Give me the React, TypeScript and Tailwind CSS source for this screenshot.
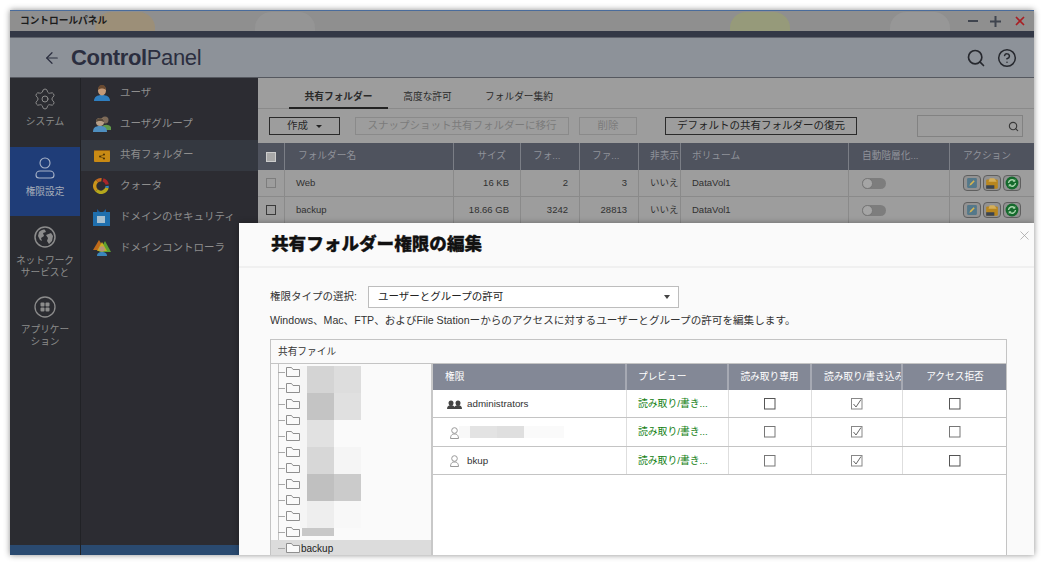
import React from "react";
import { Settings, Search, X, ArrowLeft, CircleHelp } from "lucide-react";

const font = { fontFamily: '"Liberation Sans","Noto Sans CJK JP",sans-serif' };

function PersonIcon({ shirt = "#2f7fc0", hair = "#6a4a30" }: { shirt?: string; hair?: string }) {
  return (
    <svg width="18" height="18" viewBox="0 0 18 18">
      <path d="M1 17c0-4 3-6 8-6s8 2 8 6z" fill={shirt} />
      <ellipse cx="9" cy="6.5" rx="4" ry="5" fill="#c49a78" />
      <path d="M5 6c0-4 2-5 4-5s4 1 4 5c-2-2-6-2-8 0z" fill={hair} />
    </svg>
  );
}

function GroupIcon() {
  return (
    <svg width="18" height="18" viewBox="0 0 18 18">
      <circle cx="12" cy="5" r="3.5" fill="#7d6a58" />
      <path d="M9 12c1-3 7-3 9 0v3H9z" fill="#5f9a4a" />
      <path d="M0 17c0-4 2-6 7-6s7 2 7 6z" fill="#4f8fc0" />
      <circle cx="7" cy="7" r="4" fill="#b8a088" />
      <path d="M3 7c0-3 2-4 4-4s4 1 4 4c-2-1.500-6-1.500-8 0z" fill="#5a4a3a" />
    </svg>
  );
}

function FolderIcon() {
  return (
    <svg width="18" height="14" viewBox="0 0 18 14">
      <path d="M1 2h16v2H1z" fill="#8a5a18" />
      <rect x="1" y="3" width="16" height="11" rx="1" fill="#c98a14" />
      <circle cx="7" cy="8.500" r="1" fill="#4a3208" />
      <circle cx="11" cy="6.500" r="1" fill="#4a3208" />
      <circle cx="11" cy="10.500" r="1" fill="#4a3208" />
      <path d="M7 8.500l4-2M7 8.500l4 2" stroke="#4a3208" strokeWidth=".6" />
    </svg>
  );
}

function QuotaIcon() {
  return (
    <svg width="16" height="16" viewBox="0 0 16 16" fill="none" strokeWidth="3.400">
      <path d="M4 3.100A6.200 6.200 0 0 0 3.500 12.400" stroke="#c9941a" />
      <path d="M3.500 12.400A6.200 6.200 0 0 0 14 9.800" stroke="#b5a71c" />
      <path d="M14 9.800A6.200 6.200 0 0 0 14 8" stroke="#2f86c8" />
      <path d="M8.500 1.800A6.200 6.200 0 0 0 4 3.100" stroke="#c46a20" />
      <path d="M10 1.800A6.200 6.200 0 0 1 14.200 6.500" stroke="#a8262a" />
    </svg>
  );
}

function DomainIcon() {
  return (
    <svg width="17" height="17" viewBox="0 0 17 17">
      <path d="M4 0l3 3h3l3-3v4H4z" fill="#1c5a96" />
      <rect x="0" y="3" width="17" height="14" fill="#1f6fae" />
      <rect x="4" y="7" width="8" height="7" fill="#a9c0cf" />
    </svg>
  );
}

function ControllerIcon() {
  return (
    <svg width="18" height="18" viewBox="0 0 18 18">
      <path d="M6 1l6 10H0z" fill="#c06a1a" />
      <path d="M12 2l6 11H6z" fill="#5fa030" />
      <path d="M9 3l5 9H4z" fill="#c9b020" />
      <path d="M4 17c0-3 2-4 5-4s5 1 5 4z" fill="#3a86bc" />
      <circle cx="9" cy="10" r="2.800" fill="#b89478" />
    </svg>
  );
}

function GlobeIcon() {
  return (
    <svg width="22" height="22" viewBox="0 0 22 22" fill="none">
      <circle cx="11" cy="11" r="10" stroke="#8c8c8c" strokeWidth="1.500" />
      <path
        d="M5 6c2-2 5-3 6-2l1 2-3 1 1 3-3 2 1 3-2-1-2-4zM12 9l5-2 2 3-1 5-3 3-2-3 1-3z"
        fill="#8c8c8c"
      />
    </svg>
  );
}

function AppsIcon() {
  return (
    <svg width="22" height="22" viewBox="0 0 22 22" fill="none">
      <circle cx="11" cy="11" r="10" stroke="#8c8c8c" strokeWidth="1.300" />
      <rect x="6.500" y="6.500" width="4" height="4" rx="1" fill="#8c8c8c" />
      <rect x="11.500" y="6.500" width="4" height="4" rx="1" fill="#8c8c8c" />
      <rect x="6.500" y="11.500" width="4" height="4" rx="1" fill="#8c8c8c" />
      <rect x="11.500" y="11.500" width="4" height="4" rx="1" fill="#8c8c8c" />
    </svg>
  );
}

function OutlineUser() {
  return (
    <svg width="22" height="22" viewBox="0 0 22 22" fill="none" stroke="#a9b4c8" strokeWidth="1.100">
      <circle cx="11" cy="6" r="5" />
      <path d="M6 14h10a4 4 0 0 1 4 4v0a3 3 0 0 1-3 3H5a3 3 0 0 1-3-3v0a4 4 0 0 1 4-4z" />
    </svg>
  );
}

function TreeFolder() {
  return (
    <svg width="14" height="12" viewBox="0 0 14 12" fill="none" stroke="#8f8f8f">
      <path d="M.5 10.500V1.500h5l1.500 2h6.500v7z" fill="#fafafa" />
    </svg>
  );
}

function Box({ checked = false, tone = "#555" }: { checked?: boolean; tone?: string }) {
  return (
    <svg width="12" height="12" viewBox="0 0 12 12" fill="none">
      <rect x=".5" y=".5" width="10.500" height="10.500" fill="#fff" stroke={tone} />
      {checked && <path d="M2.500 6l2.500 3 5-7.500" stroke="#666" strokeWidth="1" />}
    </svg>
  );
}

function ActionButtons() {
  const cls = "w-[18px] h-[16px] rounded-[4px] border border-[#5f5f5f] bg-[#929292] flex items-center justify-center";
  return (
    <div className="flex gap-[2px]">
      <div className={cls}>
        <svg width="12" height="12" viewBox="0 0 11 11">
          <rect x="1" y="1" width="9" height="9" rx="1" fill="#54788a" />
          <path d="M3 8l1-2 3-3 1 1-3 3z" fill="#d8b650" />
        </svg>
      </div>
      <div className={cls}>
        <svg width="14" height="13" viewBox="0 0 12 11">
          <rect x="1" y="2" width="10" height="8" rx="1" fill="#b8861e" />
          <path d="M4 1h4l2 3H3z" fill="#d4ae58" />
          <path d="M1 7h7v3H1z" fill="#3a4452" />
        </svg>
      </div>
      <div className={cls}>
        <svg width="14" height="14" viewBox="0 0 12 12" fill="none">
          <circle cx="6" cy="6" r="5.500" fill="#146a2c" />
          <path d="M3 6a3 3 0 0 1 5-2M9 6a3 3 0 0 1-5 2" stroke="#a9d4ac" strokeWidth="1.200" />
          <path d="M8.800 2.500V5H6.500zM3.200 9.500V7h2.300z" fill="#a9d4ac" />
        </svg>
      </div>
    </div>
  );
}

const railItems = [
  { label: ["システム"], icon: <Settings size={24} strokeWidth={1} color="#8c8c8c" />, h: "h-[69px]", pt: "pt-[9px]", mt: "mt-[5px]" },
  { label: ["権限設定"], icon: <OutlineUser />, h: "h-[69px]", pt: "pt-[10px]", mt: "mt-[7px]", active: true },
  { label: ["ネットワーク", "サービスと"], icon: <GlobeIcon />, h: "h-[70px]", pt: "pt-[10px]", mt: "mt-[7px]" },
  { label: ["アプリケー", "ション"], icon: <AppsIcon />, h: "h-[70px]", pt: "pt-[10px]", mt: "mt-[6px]" },
];

const subItems = [
  { label: "ユーザ", icon: <PersonIcon /> },
  { label: "ユーザグループ", icon: <GroupIcon /> },
  { label: "共有フォルダー", icon: <FolderIcon />, active: true },
  { label: "クォータ", icon: <QuotaIcon /> },
  { label: "ドメインのセキュリティ", icon: <DomainIcon /> },
  { label: "ドメインコントローラ", icon: <ControllerIcon /> },
];

const mainCols = "grid grid-cols-[27px_169px_67px_59px_59px_42px_168px_101px_84px]";

const shareRows = [
  { name: "Web", size: "16 KB", a: "2", b: "3", tone: "#7d7d7d" },
  { name: "backup", size: "18.66 GB", a: "3242", b: "28813", tone: "#3a3a3a" },
];

const permCols = "grid grid-cols-[194px_102px_83px_91px_104px]";

const mosaic = [
  ["#d4d4d4", "#dddddd"],
  ["#c4c4c4", "#e0e0e0"],
  ["#e1e1e1", "#fafafa"],
  ["#d7d7d7", "#f5f5f5"],
  ["#c0c0c0", "#cbcbcb"],
  ["#eeeeee", "#f8f8f8"],
];

function GhostBlob({ color }: { color: string }) {
  return <div className={`w-[60px] h-[34px] rounded-t-[16px] mt-[1px] ${color}`} />;
}

export default function App() {
  return (
    <div style={font} className="w-[1044px] h-[565px] bg-white pt-[10px] px-[10px] overflow-hidden">
      <div className="relative w-[1024px] h-[545px] overflow-hidden flex flex-col shadow-[0_0_6px_rgba(0,0,0,0.45)] border-t border-[#4a6c9c]">
        {/* title bar */}
        <div className="relative h-[20px] shrink-0 bg-[#8f8f8f] flex items-center px-[10px] overflow-hidden">
          <span className="text-[9.700px] font-bold text-[#1c1c1c] leading-none z-10">コントロールパネル</span>
          <div className="absolute inset-0 flex">
            <div className="ml-[85px]"><GhostBlob color="bg-[#9c8f78]" /></div>
            <div className="ml-[100px]"><GhostBlob color="bg-[#959595]" /></div>
            <div className="ml-[415px]"><GhostBlob color="bg-[#969a7a]" /></div>
            <div className="ml-[100px]"><GhostBlob color="bg-[#979797]" /></div>
          </div>
          <div className="ml-auto flex items-center gap-[12px] z-10 mr-[-3px]">
            <div className="w-[10px] h-[2px] bg-[#3f444e]" />
            <svg width="11" height="11" viewBox="0 0 11 11"><path d="M5.500 0v11M0 5.500h11" stroke="#3f444e" strokeWidth="2" /></svg>
            <X size={14} strokeWidth={3} color="#a81f24" />
          </div>
        </div>
        <div className="h-[7px] shrink-0 bg-[#333846] border-b border-[#5d616a]" />
        {/* header */}
        <div className="h-[39px] shrink-0 bg-[#8d9299] flex items-center pl-[33px] pr-[17px] text-[#2b2e3f]">
          <ArrowLeft size={18} strokeWidth={1.600} />
          <span className="ml-[10px] text-[22px] leading-none tracking-[-0.35px]">
            <span className="font-bold">Control</span>Panel
          </span>
          <Search size={20} strokeWidth={2} className="ml-auto text-[#26282e]" />
          <CircleHelp size={20} strokeWidth={1.800} className="ml-[11px] text-[#26282e]" />
        </div>
        {/* body */}
        <div className="flex-1 min-h-0 flex border-t border-[#55585f]">
          <div className="relative w-[71px] shrink-0 bg-[#2b2c31] border-r border-[#212226] flex flex-col">
            {railItems.map((r) => (
              <div
                key={r.label[0]}
                className={`${r.h} ${r.pt} shrink-0 flex flex-col items-center ${r.active ? "bg-[#1f3d78] text-[#a5adb8]" : "text-[#8c8c8c]"}`}
              >
                {r.icon}
                <div className={`${r.mt} text-[9.700px] leading-[11.500px] text-center`}>
                  {r.label.map((l) => <div key={l}>{l}</div>)}
                </div>
              </div>
            ))}
            <div className="mt-auto h-[10px] shrink-0 bg-[#2a4a70]" />
          </div>
          <div className="w-[177px] shrink-0 bg-[#2c2c32] flex flex-col">
            {subItems.map((s) => (
              <div
                key={s.label}
                className={`h-[31px] shrink-0 flex items-center text-[10.500px] text-[#8e8e8e] ${s.active ? "bg-[#343840]" : ""}`}
              >
                <div className="w-[39px] pl-[12px] pb-[1px] flex items-center">{s.icon}</div>
                <span className="whitespace-nowrap pb-[2px]">{s.label}</span>
              </div>
            ))}
            <div className="mt-auto h-[10px] shrink-0 bg-[#2a4a70]" />
          </div>
          <div className="flex-1 min-w-0 bg-[#9d9d9d] flex flex-col">
            <div className="h-[31px] shrink-0 pl-[31px] flex items-end border-b border-[#8a8a8a] text-[9.700px] text-[#2a2a2a]">
              <div className="w-[99px] h-[22px] flex items-center justify-center font-bold border-b-2 border-[#222] mb-[-1px]">共有フォルダー</div>
              <div className="w-[65px] h-[22px] ml-[7px] flex items-center justify-center">高度な許可</div>
              <div className="w-[80px] h-[22px] ml-[19px] flex items-center justify-center">フォルダー集約</div>
            </div>
            <div className="h-[34px] shrink-0 flex items-center pl-[11px] text-[10.500px]">
              <div className="w-[71px] h-[18px] border border-[#2a2a2a] flex items-center justify-center gap-[8px] text-[#2a2a2a]">
                作成
                <span className="w-0 h-0 border-x-[3px] border-x-transparent border-t-[3px] border-t-[#222]" />
              </div>
              <div className="w-[214px] h-[18px] ml-[15px] border border-[#8a8a8a] flex items-center justify-center text-[#7b7b7b]">スナップショット共有フォルダーに移行</div>
              <div className="w-[58px] h-[18px] ml-[10px] border border-[#8a8a8a] flex items-center justify-center text-[#7b7b7b]">削除</div>
              <div className="w-[192px] h-[18px] ml-[28px] border border-[#2a2a2a] flex items-center justify-center text-[#222]">デフォルトの共有フォルダーの復元</div>
              <div className="w-[106px] h-[22px] ml-[60px] border border-[#828282] flex items-center justify-end pr-[3px]">
                <Search size={11} strokeWidth={2.500} color="#3a3a3a" />
              </div>
            </div>
            <div className={`${mainCols} h-[27px] shrink-0 bg-[#4f535e] text-[9.700px] text-[#8f929a]`}>
              <div className="flex items-center justify-center border-r border-[#7b7e86]"><div className="w-[10px] h-[10px] bg-[#a8a8a8] border border-[#ccc]" /></div>
              <div className="flex items-center pl-[13px] border-r border-[#7b7e86]">フォルダー名</div>
              <div className="flex items-center justify-end pr-[14px] border-r border-[#7b7e86]">サイズ</div>
              <div className="flex items-center pl-[12px] border-r border-[#7b7e86]">フォ...</div>
              <div className="flex items-center pl-[12px] border-r border-[#7b7e86]">ファ...</div>
              <div className="flex items-center pl-[11px] border-r border-[#7b7e86] whitespace-nowrap overflow-hidden">非表示</div>
              <div className="flex items-center pl-[11px] border-r border-[#7b7e86]">ボリューム</div>
              <div className="flex items-center pl-[13px] border-r border-[#7b7e86]">自動階層化...</div>
              <div className="flex items-center pl-[13px]">アクション</div>
            </div>
            {shareRows.map((r) => (
              <div key={r.name} className={`${mainCols} h-[27px] shrink-0 border-b border-[#8a8a8a] text-[9.500px] text-[#303030]`}>
                <div className="flex items-center justify-center border-r border-[#8a8a8a]"><div className="w-[10px] h-[10px] border" style={{ borderColor: r.tone }} /></div>
                <div className="flex items-center pl-[11px] border-r border-[#8a8a8a]">{r.name}</div>
                <div className="flex items-center justify-end pr-[11px] border-r border-[#8a8a8a]">{r.size}</div>
                <div className="flex items-center justify-end pr-[11px] border-r border-[#8a8a8a]">{r.a}</div>
                <div className="flex items-center justify-end pr-[11px] border-r border-[#8a8a8a]">{r.b}</div>
                <div className="flex items-center pl-[11px] border-r border-[#8a8a8a] whitespace-nowrap overflow-hidden">いいえ</div>
                <div className="flex items-center pl-[11px] border-r border-[#8a8a8a]">DataVol1</div>
                <div className="flex items-center pl-[13px] border-r border-[#8a8a8a]">
                  <div className="w-[24px] h-[11px] rounded-full bg-[#7d7d7d] flex items-center">
                    <div className="w-[11px] h-[11px] rounded-full bg-[#a5a5a5] border border-[#777]" />
                  </div>
                </div>
                <div className="flex items-center pl-[13px]"><ActionButtons /></div>
              </div>
            ))}
          </div>
        </div>

        {/* modal */}
        <div className="absolute left-[229px] top-[212px] right-0 bottom-0 bg-[#fafafa] shadow-[0_0_6px_rgba(0,0,0,0.35)] flex flex-col">
          <div className="h-[45px] shrink-0 border-b-2 border-[#f0f0f0] flex items-center pl-[32px] pr-[2px]">
            <span className="text-[17.600px] font-black text-[#111] leading-none [-webkit-text-stroke:0.3px_#111]">共有フォルダー権限の編集</span>
            <X size={15} strokeWidth={1.200} color="#a0a0a0" className="ml-auto -mt-[18px]" />
          </div>
          <div className="flex-1 min-h-0 pl-[31px] pr-[27px] flex flex-col">
            <div className="mt-[18px] h-[22px] shrink-0 flex items-center text-[10.500px] text-[#333]">
              <span className="w-[98px]">権限タイプの選択:</span>
              <div className="w-[311px] h-[22px] bg-white border border-[#bdbdbd] flex items-center pl-[9px] pr-[8px] text-[10.500px] text-[#222]">
                ユーザーとグループの許可
                <span className="ml-auto w-0 h-0 border-x-[3.500px] border-x-transparent border-t-[4px] border-t-[#444]" />
              </div>
            </div>
            <div className="mt-[5px] h-[16px] shrink-0 flex items-center text-[10.600px] text-[#333] whitespace-nowrap">
              Windows、Mac、FTP、およびFile Stationーからのアクセスに対するユーザーとグループの許可を編集します。
            </div>
            <div className="mt-[10px] flex-1 min-h-0 border-x border-t border-[#c4c4c4] flex flex-col">
              <div className="h-[24px] shrink-0 border-b border-[#c4c4c4] flex items-center pl-[7px] pt-[2px] text-[9.700px] text-[#333]">共有ファイル</div>
              <div className="flex-1 min-h-0 flex">
                <div className="relative w-[162px] shrink-0 border-r-2 border-[#c8c8c8] overflow-hidden">
                  <div className="absolute left-[7px] top-0 bottom-0 w-px bg-[#c4c4c4]" />
                  {Array.from({ length: 12 }, (_, i) => (
                    <div key={i} className={`relative h-[16px] flex items-center pl-[15px] ${i === 11 ? "bg-[#dcdcdc]" : ""}`}>
                      <div className="absolute left-[7px] top-[8px] w-[7px] h-px bg-[#a8a8a8]" />
                      <TreeFolder />
                      {i === 11 && <span className="ml-[1px] text-[10px] text-[#222]">backup</span>}
                    </div>
                  ))}
                  <div className="absolute left-[29px] top-[2px] w-[7px] h-[162px] bg-[#f5f5f5]" />
                  <div className="absolute left-[36px] top-[2px] w-[54px] grid grid-cols-2">
                    {mosaic.flat().map((c, i) => (
                      <div key={i} className="h-[27px]" style={{ background: c }} />
                    ))}
                    <div className="col-span-2 h-[8px] bg-[#c8c8c8] w-[32px] -ml-[5px]" />
                  </div>
                </div>
                <div className="flex-1 min-w-0 bg-white flex flex-col">
                  <div className={`${permCols} h-[26px] shrink-0 bg-[#838896] text-[9.700px] text-white`}>
                    <div className="flex items-center pl-[12px] pt-[1px] border-r-2 border-[#a6a9b3]">権限</div>
                    <div className="flex items-center pl-[11px] pt-[1px] border-r-2 border-[#a6a9b3]">プレビュー</div>
                    <div className="flex items-center justify-center pt-[1px] border-r-2 border-[#a6a9b3]">読み取り専用</div>
                    <div className="flex items-center pl-[12px] pt-[1px] border-r-2 border-[#a6a9b3] whitespace-nowrap overflow-hidden">読み取り/書き込み</div>
                    <div className="flex items-center justify-center pt-[1px]">アクセス拒否</div>
                  </div>
                  {["administrators", "", "bkup"].map((name, i) => (
                    <div key={i} className={`${permCols} ${i === 0 ? "h-[28px]" : "h-[28.500px]"} shrink-0 border-b border-[#c4c4c4] text-[9.800px]`}>
                      <div className="relative flex items-center pl-[14px] pt-[2px] border-r border-[#dedede] text-[#333]">
                        {i === 0 ? (
                          <svg width="15" height="10" viewBox="0 0 15 10"><circle cx="4" cy="3" r="2.500" fill="#444" /><circle cx="11" cy="3" r="2.500" fill="#444" /><path d="M0 9c0-3 2-4 4-4s3 1 3.500 2C8 6 9 5 11 5s4 1 4 4z" fill="#444" /></svg>
                        ) : (
                          <svg width="15" height="12" viewBox="0 0 15 12" fill="none" stroke="#999"><circle cx="7.500" cy="3.500" r="2.800" /><path d="M3.500 11.500c0-3 1.500-4 2.500-4.500h3c1 .5 2.500 1.500 2.500 4.500z" /></svg>
                        )}
                        {name && <span className="ml-[5px]">{name}</span>}
                        {i === 1 && (
                          <div className="absolute left-[26px] top-[8px] h-[12px] flex">
                            <div className="w-[11px] bg-[#f8f8f8]" />
                            <div className="w-[27px] bg-[#e3e3e3]" />
                            <div className="w-[27px] bg-[#dfdfdf]" />
                            <div className="w-[40px] bg-[#fafafa]" />
                          </div>
                        )}
                      </div>
                      <div className="flex items-center pl-[11px] pt-[2px] border-r border-[#dedede] text-[#128012] whitespace-nowrap overflow-hidden">読み取り/書き...</div>
                      <div className="flex items-center justify-center pt-[1px] border-r border-[#dedede]"><Box tone={i === 0 ? "#555" : "#777"} /></div>
                      <div className="flex items-center justify-center pt-[1px] border-r border-[#dedede]"><Box checked tone="#888" /></div>
                      <div className="flex items-center justify-center pt-[1px]"><Box tone={i === 1 ? "#777" : "#555"} /></div>
                    </div>
                  ))}
                </div>
              </div>
            </div>
          </div>
        </div>
      </div>
    </div>
  );
}
